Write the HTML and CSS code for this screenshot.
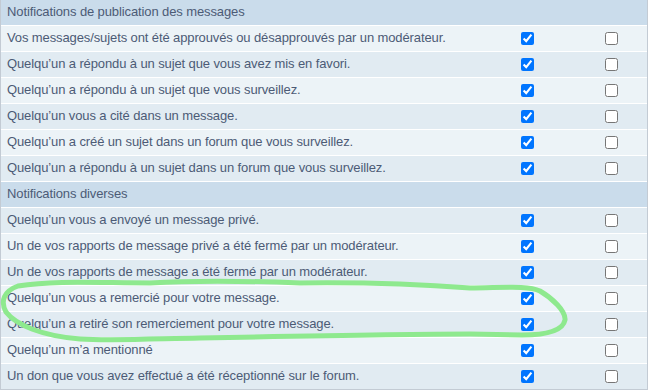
FILE: index.html
```html
<!DOCTYPE html>
<html lang="fr">
<head>
<meta charset="utf-8">
<title>Notifications</title>
<link rel="stylesheet" href="styles.css">
</head>
<body>
<div class="wrap">
  <div class="table">
    <div class="row head first"><span class="label">Notifications de publication des messages</span></div>
    <div class="row bg1"><span class="label">Vos messages/sujets ont été approuvés ou désapprouvés par un modérateur.</span><span class="cell"><input type="checkbox" checked></span><span class="cell"><input type="checkbox"></span></div>
    <div class="row bg2"><span class="label">Quelqu’un a répondu à un sujet que vous avez mis en favori.</span><span class="cell"><input type="checkbox" checked></span><span class="cell"><input type="checkbox"></span></div>
    <div class="row bg1"><span class="label">Quelqu’un a répondu à un sujet que vous surveillez.</span><span class="cell"><input type="checkbox" checked></span><span class="cell"><input type="checkbox"></span></div>
    <div class="row bg2"><span class="label">Quelqu’un vous a cité dans un message.</span><span class="cell"><input type="checkbox" checked></span><span class="cell"><input type="checkbox"></span></div>
    <div class="row bg1"><span class="label">Quelqu’un a créé un sujet dans un forum que vous surveillez.</span><span class="cell"><input type="checkbox" checked></span><span class="cell"><input type="checkbox"></span></div>
    <div class="row bg2"><span class="label">Quelqu’un a répondu à un sujet dans un forum que vous surveillez.</span><span class="cell"><input type="checkbox" checked></span><span class="cell"><input type="checkbox"></span></div>
    <div class="row head"><span class="label">Notifications diverses</span></div>
    <div class="row bg2"><span class="label">Quelqu’un vous a envoyé un message privé.</span><span class="cell"><input type="checkbox" checked></span><span class="cell"><input type="checkbox"></span></div>
    <div class="row bg1"><span class="label">Un de vos rapports de message privé a été fermé par un modérateur.</span><span class="cell"><input type="checkbox" checked></span><span class="cell"><input type="checkbox"></span></div>
    <div class="row bg2"><span class="label">Un de vos rapports de message a été fermé par un modérateur.</span><span class="cell"><input type="checkbox" checked></span><span class="cell"><input type="checkbox"></span></div>
    <div class="row bg1"><span class="label">Quelqu’un vous a remercié pour votre message.</span><span class="cell"><input type="checkbox" checked></span><span class="cell"><input type="checkbox"></span></div>
    <div class="row bg2"><span class="label">Quelqu’un a retiré son remerciement pour votre message.</span><span class="cell"><input type="checkbox" checked></span><span class="cell"><input type="checkbox"></span></div>
    <div class="row bg1"><span class="label">Quelqu’un m’a mentionné</span><span class="cell"><input type="checkbox" checked></span><span class="cell"><input type="checkbox"></span></div>
    <div class="row bg2"><span class="label">Un don que vous avez effectué a été réceptionné sur le forum.</span><span class="cell"><input type="checkbox" checked></span><span class="cell"><input type="checkbox"></span></div>
  </div>
  <svg class="scribble" width="650" height="392" viewBox="0 0 650 392" aria-hidden="true">
    <path d="M470 288 C500 288 528 285 540 291 C552 298 566 311 565 320 C563 330 548 335 522 335 L470 334 C400 334 300 336 200 338 C150 339 110 341 80 339 C42 336 16 325 6 312 C0 301 4 291 18 286 C55 280 100 283 150 283 C200 280 250 281 300 283 C380 282 430 285 470 288 Z" fill="none" stroke="#8ee98e" stroke-width="5" stroke-linejoin="round" stroke-linecap="round"/>
  </svg>
</div>
</body>
</html>
```

FILE: styles.css
```css
html, body {
  margin: 0;
  padding: 0;
  background: #ffffff;
}

.wrap {
  position: relative;
  width: 650px;
  height: 392px;
  overflow: hidden;
}

.table {
  width: 648px;
  box-sizing: border-box;
  border-left: 1px solid #c3cbd4;
  border-right: 1px solid #c3cbd4;
  border-bottom: 1px solid #c3cbd4;
  font-family: "Liberation Sans", Arial, sans-serif;
  font-size: 13px;
  letter-spacing: -0.11px;
  color: #4c5b76;
}

.row {
  display: grid;
  grid-template-columns: 1fr 98px 71px;
  align-items: center;
  height: 25px;
  border-top: 1px solid #ffffff;
}

.row.first {
  border-top: 0;
}

.head {
  background: #cadceb;
}

.bg1 {
  background: #ecf3f7;
}

.bg2 {
  background: #e1ebf2;
}

.label {
  padding-left: 6px;
  padding-bottom: 2px;
  white-space: nowrap;
}

.cell {
  display: flex;
  justify-content: center;
  align-items: center;
}

.cell input {
  margin: 0;
  width: 13px;
  height: 13px;
}

.scribble {
  position: absolute;
  left: 0;
  top: 0;
  pointer-events: none;
}
```
